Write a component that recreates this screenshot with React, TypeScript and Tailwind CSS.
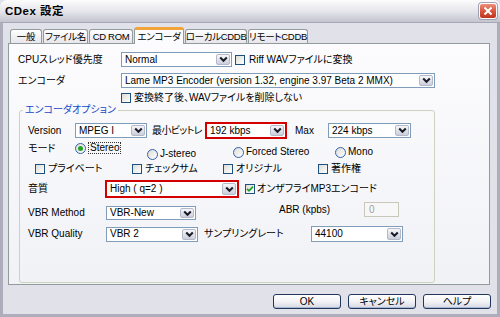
import React from "react";

function Chevron() {
  return (
    <svg width="9" height="7" viewBox="0 0 9 7">
      <path d="M1.2 1.5 L4.5 4.8 L7.8 1.5" stroke="#1b1b28" strokeWidth="2" fill="none" />
    </svg>
  );
}

function DropBtn() {
  return (
    <div className="m-px flex w-[14px] shrink-0 items-center justify-center rounded-[2px] border border-[#b4b9ca] bg-gradient-to-b from-[#f7f7fa] to-[#cbcedb]">
      <Chevron />
    </div>
  );
}

function Select({ className, text }: { className: string; text: string }) {
  return (
    <div className={"flex shrink-0 items-stretch border border-[#7f9db9] bg-white " + className}>
      <span className="flex flex-1 items-center overflow-hidden whitespace-nowrap pl-[3px]">{text}</span>
      <DropBtn />
    </div>
  );
}

function RedSelect({ className, text }: { className: string; text: string }) {
  return (
    <div className={"flex shrink-0 items-stretch border-2 border-[#d40000] bg-white " + className}>
      <span className="flex flex-1 items-center overflow-hidden whitespace-nowrap pl-[3px]">{text}</span>
      <DropBtn />
    </div>
  );
}

function Check({ className = "", checked = false }: { className?: string; checked?: boolean }) {
  return (
    <span
      className={
        "flex h-[10px] w-[10px] shrink-0 items-center justify-center border border-[#1c5180] bg-gradient-to-br from-[#dcdcd6] to-white " +
        className
      }
    >
      {checked && (
        <svg width="8" height="8" viewBox="0 0 8 8">
          <path d="M1 3.8 L3 5.8 L7 1.6" stroke="#21a121" strokeWidth="1.8" fill="none" />
        </svg>
      )}
    </span>
  );
}

function CheckLabel({ className, label }: { className: string; label: string }) {
  return (
    <div className={"flex shrink-0 items-center gap-[3px] " + className}>
      <Check />
      <span className="whitespace-nowrap">{label}</span>
    </div>
  );
}

function Radio({
  className,
  label,
  checked = false,
}: {
  className: string;
  label: string;
  checked?: boolean;
}) {
  return (
    <div className={"flex h-[12px] shrink-0 items-center gap-[2px] " + className}>
      <span className="flex h-[11px] w-[11px] shrink-0 items-center justify-center rounded-full border border-[#2f62b0] bg-gradient-to-br from-[#dcdcd6] to-white">
        {checked && <span className="h-[5px] w-[5px] rounded-full bg-[#22a422]" />}
      </span>
      {checked ? (
        <span className="border border-dotted border-[#333] px-px leading-[10px]">{label}</span>
      ) : (
        <span className="whitespace-nowrap">{label}</span>
      )}
    </div>
  );
}

function Tab({ className, label, active = false }: { className: string; label: string; active?: boolean }) {
  if (active) {
    return (
      <div
        className={
          "relative z-10 -mb-px flex h-[17px] shrink-0 items-center justify-center whitespace-nowrap rounded-t-[3px] border-x border-t-[3px] border-x-[#919b9c] border-t-[#f2a33a] bg-[#fcfcfe] text-[9.5px] tracking-[-0.3px] " +
          className
        }
      >
        {label}
      </div>
    );
  }
  return (
    <div
      className={
        "flex h-[14px] shrink-0 items-center justify-center whitespace-nowrap rounded-t-[3px] border-x border-t border-[#919b9c] bg-gradient-to-b from-white to-[#e6e6ec] text-[9.5px] tracking-[-0.3px] " +
        className
      }
    >
      {label}
    </div>
  );
}

function Button({ label }: { label: string }) {
  return (
    <div className="flex h-[15px] w-[68px] items-center justify-center rounded-[3px] border border-[#22365c] bg-gradient-to-b from-white via-[#f3f3f7] to-[#d6d8e2] shadow-[inset_0_-1px_0_#a9b8d6]">
      {label}
    </div>
  );
}

export default function App() {
  return (
    <div className="flex h-[317px] w-[500px] flex-col bg-[#e0e0e8] font-['Liberation_Sans','Noto_Sans_CJK_JP',sans-serif] text-[10px] leading-[12px] text-black [font-feature-settings:'palt']">
      {/* title bar */}
      <div className="flex h-[23px] shrink-0 items-center justify-between rounded-t-[7px] border-b border-[#a6a6b4] bg-gradient-to-b from-[#fdfdfd] via-[#e6e6ec] to-[#c4c4d0] pl-[5px] pr-[3px]">
        <span className="text-[11.5px] font-bold tracking-[0.5px]">CDex 設定</span>
        <div className="flex h-[16px] w-[18px] items-center justify-center rounded-[3px] border border-white bg-gradient-to-b from-[#eb8f7b] via-[#d9553d] to-[#c0341e] shadow-[0_0_0_1px_#a0a0b0]">
          <svg width="10" height="10" viewBox="0 0 10 10">
            <path d="M1.5 1.5 L8.5 8.5 M8.5 1.5 L1.5 8.5" stroke="white" strokeWidth="2" />
          </svg>
        </div>
      </div>

      {/* body */}
      <div className="flex flex-1 flex-col border-x-[3px] border-b-[3px] border-[#adadbc] bg-[#e1e2e9]">
        {/* tabs */}
        <div className="ml-[7px] mt-[4px] flex h-[16px] items-end gap-px">
          <Tab className="w-[32px]" label="一般" />
          <Tab className="w-[45px]" label="ファイル名" />
          <Tab className="w-[44px]" label="CD ROM" />
          <Tab className="w-[50px]" label="エンコーダ" active />
          <Tab className="w-[62px]" label="ローカルCDDB" />
          <Tab className="w-[60px]" label="リモートCDDB" />
        </div>

        {/* panel */}
        <div className="ml-[5px] flex h-[242px] w-[482px] flex-col border border-[#919b9c] bg-gradient-to-b from-[#fcfcfe] to-[#f1f2f6] pt-[8px]">
          <div className="flex h-[15px] items-center">
            <span className="ml-[9px] w-[103px] shrink-0 whitespace-nowrap">CPUスレッド優先度</span>
            <Select className="h-[15px] w-[111px]" text="Normal" />
            <Check className="ml-[3px]" />
            <span className="ml-[4px] whitespace-nowrap">Riff WAVファイルに変換</span>
          </div>

          <div className="mt-[6px] flex h-[15px] items-center">
            <span className="ml-[9px] w-[103px] shrink-0">エンコーダ</span>
            <Select className="h-[15px] w-[314px]" text="Lame MP3 Encoder (version 1.32, engine 3.97 Beta 2 MMX)" />
          </div>

          <div className="mt-[4px] flex h-[12px] items-center">
            <Check className="ml-[112px]" />
            <span className="ml-[3px] whitespace-nowrap">変換終了後、WAVファイルを削除しない</span>
          </div>

          <fieldset className="ml-[10px] h-[179px] w-[416px] rounded-[3px] border border-[#d0d0bf]">
            <legend className="ml-[3px] px-[2px] leading-[12px] text-[#1548c8]">エンコーダオプション</legend>

            <div className="mt-[6px] flex h-[17px] items-center">
              <span className="ml-[8px] w-[47px] shrink-0">Version</span>
              <Select className="h-[15px] w-[72px]" text="MPEG I" />
              <span className="ml-[5px] w-[53px] shrink-0 whitespace-nowrap tracking-[-0.6px]">最小ビットレ</span>
              <RedSelect className="h-[17px] w-[82px]" text="192 kbps" />
              <span className="ml-[8px] w-[33px] shrink-0">Max</span>
              <Select className="h-[15px] w-[83px]" text="224 kbps" />
            </div>

            <div className="mt-[3px] flex h-[18px] items-start">
              <span className="ml-[8px] mt-[1px] w-[47px] shrink-0">モード</span>
              <Radio className="w-[72px]" label="Stereo" checked />
              <Radio className="mt-[6px] w-[86px]" label="J-stereo" />
              <Radio className="mt-[4px] w-[102px]" label="Forced Stereo" />
              <Radio className="mt-[4px]" label="Mono" />
            </div>

            <div className="mt-[3px] flex h-[12px] items-center">
              <CheckLabel className="ml-[15px] w-[97px]" label="プライベート" />
              <CheckLabel className="w-[91px]" label="チェックサム" />
              <CheckLabel className="w-[95px]" label="オリジナル" />
              <CheckLabel className="" label="著作権" />
            </div>

            <div className="mt-[5px] flex h-[18px] items-center">
              <span className="ml-[8px] w-[77px] shrink-0">音質</span>
              <RedSelect className="h-[18px] w-[134px]" text="High ( q=2 )" />
              <Check className="ml-[6px]" checked />
              <span className="ml-[2px] whitespace-nowrap">オンザフライMP3エンコード</span>
            </div>

            <div className="mt-[4px] flex h-[18px] items-start">
              <span className="ml-[8px] mt-[5px] w-[78px] shrink-0">VBR Method</span>
              <Select className="mt-[4px] h-[14px] w-[90px]" text="VBR-New" />
              <span className="ml-[83px] mt-[2px] w-[85px] shrink-0">ABR (kpbs)</span>
              <div className="flex h-[15px] w-[35px] items-center border border-[#c9c7ba] bg-[#f7f7f7] pl-[4px] text-[#a0a0a0]">
                0
              </div>
            </div>

            <div className="mt-[6px] flex h-[16px] items-center">
              <span className="ml-[8px] w-[78px] shrink-0">VBR Quality</span>
              <Select className="h-[15px] w-[92px]" text="VBR 2" />
              <span className="ml-[6px] w-[107px] shrink-0 whitespace-nowrap">サンプリングレート</span>
              <Select className="h-[16px] w-[92px]" text="44100" />
            </div>
          </fieldset>
        </div>

        {/* buttons */}
        <div className="mt-[9px] flex justify-end gap-[7px] pr-[6px]">
          <Button label="OK" />
          <Button label="キャンセル" />
          <Button label="ヘルプ" />
        </div>
      </div>
    </div>
  );
}
